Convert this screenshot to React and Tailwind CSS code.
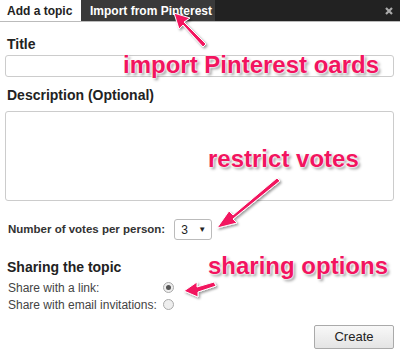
import React from "react";

const Note = ({ className, children }) => (
  <div
    className={
      "absolute font-bold text-[#f2145f] whitespace-nowrap leading-none text-[24px] [text-shadow:0_0_2px_#fff,0_0_2px_#fff,0_0_3px_#fff,2px_2px_3px_rgba(0,0,0,0.45)] " +
      className
    }
  >
    {children}
  </div>
);

export default function App() {
  return (
    <div className="relative w-[400px] h-[354px] bg-white overflow-hidden font-['Liberation_Sans',Arial,sans-serif] text-[#222]">
      <div className="flex h-[22px] bg-[#222] border-b border-[#bbb] items-stretch">
        <div className="w-[81px] bg-white text-[12px] font-bold text-[#222] pl-[7px] flex items-center whitespace-nowrap">
          Add a topic
        </div>
        <div className="w-[134px] bg-[#3a3a3a] text-[12px] font-bold text-white pl-[9px] flex items-center whitespace-nowrap">
          Import from Pinterest
        </div>
        <div className="flex-1 flex justify-end items-center pr-[7px]">
          <svg width="8" height="8" viewBox="0 0 8 8">
            <path d="M1 1L7 7M7 1L1 7" stroke="#aaa" strokeWidth="2.2" />
          </svg>
        </div>
      </div>

      <div className="px-[5px]">
        <div className="text-[14px] font-bold pl-[2px] mt-[14px] leading-[16px]">Title</div>
        <div className="mt-[3px] h-[22px] w-[389px] border border-[#ccc] rounded-[3px]" />
        <div className="text-[14px] font-bold pl-[2px] mt-[10px] leading-[16px]">
          Description (Optional)
        </div>
        <div className="mt-[8px] h-[90px] w-[389px] border border-[#ccc] rounded-[3px]" />

        <div className="flex items-center mt-[18px] pl-[3px]">
          <span className="text-[11.5px] font-bold text-[#333] whitespace-nowrap">Number of votes per person:</span>
          <div className="ml-[9px] w-[38px] h-[21px] border border-[#bbb] rounded-[3px] flex items-center justify-between pl-[6px] pr-[5px] text-[12px]">
            <span>3</span>
            <span className="text-[8px]">▼</span>
          </div>
        </div>

        <div className="text-[14px] font-bold pl-[2px] mt-[19px] leading-[16px]">Sharing the topic</div>
        <div className="mt-[4px] pl-[3px] text-[12px] text-[#444]">
          <div className="flex items-center h-[17px]">
            <span className="w-[155px]">Share with a link:</span>
            <span className="w-[11px] h-[11px] rounded-full border border-[#aaa] bg-[#eee] flex items-center justify-center">
              <span className="w-[5px] h-[5px] rounded-full bg-[#555]" />
            </span>
          </div>
          <div className="flex items-center h-[17px]">
            <span className="w-[155px]">Share with email invitations:</span>
            <span className="w-[11px] h-[11px] rounded-full border border-[#aaa] bg-[#eee]" />
          </div>
        </div>

        <div className="flex justify-end mt-[12px] pr-[1px]">
          <div className="w-[80px] h-[24px] border border-[#aaa] rounded-[2px] bg-gradient-to-b from-[#f8f8f8] to-[#e4e4e4] text-[13px] flex items-center justify-center text-[#222]">
            Create
          </div>
        </div>
      </div>

      <svg className="absolute left-0 top-0 pointer-events-none" width="400" height="354">
        <defs>
          <filter id="sh" x="-20%" y="-20%" width="140%" height="140%">
            <feDropShadow dx="1.5" dy="1.5" stdDeviation="1.2" floodColor="#000" floodOpacity="0.4" />
          </filter>
        </defs>
        <g fill="#f2145f" stroke="#fff" strokeWidth="1" filter="url(#sh)">
          <path d="M206 44 L184 22 L190 18 L174 13 L179 29 L183 25 L203 47 Z" />
          <path d="M277 178 L233 215 L229 211 L217 228 L237 223 L233 219 L280 181 Z" />
          <path d="M214 282 L197 287 L197 282 L184 291 L198 297 L198 292 L216 286 Z" />
        </g>
      </svg>

      <Note className="left-[123px] top-[53px]">import Pinterest oards</Note>
      <Note className="left-[208px] top-[147px]">restrict votes</Note>
      <Note className="left-[208px] top-[254px]">sharing options</Note>
    </div>
  );
}
